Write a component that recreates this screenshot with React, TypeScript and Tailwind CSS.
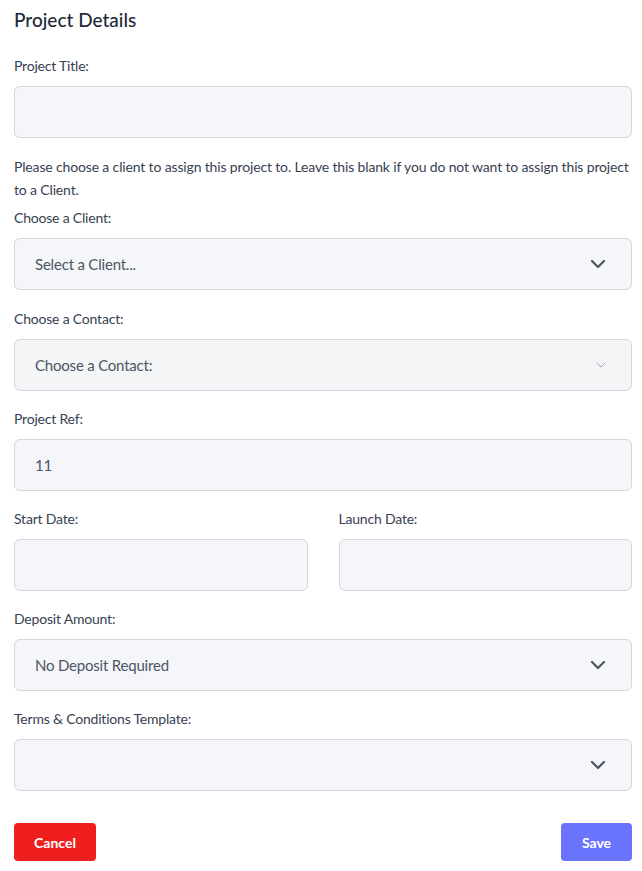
import React from 'react';

const font = { fontFamily: 'Lato, sans-serif' };

function Chevron({ muted = false }: { muted?: boolean }) {
  if (muted) {
    return (
      <svg width="12" height="12" viewBox="0 0 12 12" fill="none" className="text-[#a3a8b0]">
        <path d="M2 4l4 4 4-4" stroke="currentColor" strokeWidth="1" strokeLinecap="round" strokeLinejoin="round" />
      </svg>
    );
  }
  return (
    <svg width="18" height="18" viewBox="0 0 18 18" fill="none" className="text-[#4b5563]">
      <path d="M3 6l6 6 6-6" stroke="currentColor" strokeWidth="2.2" strokeLinecap="round" strokeLinejoin="round" />
    </svg>
  );
}

function Label({ children }: { children: React.ReactNode }) {
  return (
    <label className="block h-5 leading-5 text-[14px] tracking-[-0.2px] text-[#374151] mb-2.5">{children}</label>
  );
}

function TextBox({ value }: { value?: string }) {
  return (
    <div className="h-[52px] rounded-md border border-[#d4d7dd] bg-[#f5f6fa] px-5 flex items-center text-[15px] tracking-[-0.2px] text-[#4b5563]">
      {value}
    </div>
  );
}

function SelectBox({ value, muted = false }: { value?: string; muted?: boolean }) {
  return (
    <div
      className={`h-[52px] rounded-md border border-[#d4d7dd] pl-5 pr-6 flex items-center justify-between text-[15px] tracking-[-0.2px] text-[#4b5563] ${
        muted ? 'bg-[#f4f5f6]' : 'bg-[#f5f6fa]'
      }`}
    >
      <span>{value}</span>
      <Chevron muted={muted} />
    </div>
  );
}

export default function App() {
  return (
    <div className="bg-white w-[642px] min-h-[871px] pl-3.5 pr-2.5 pt-2" style={font}>
      <h1 className="text-[19px] leading-6 font-medium text-[#1f2937] mb-6">Project Details</h1>

      <div className="mb-[17px]">
        <Label>Project Title:</Label>
        <TextBox />
      </div>

      <p className="text-[14px] leading-[23px] tracking-[-0.15px] text-[#374151] mb-[7px]">
        Please choose a client to assign this project to. Leave this blank if you do not want to assign this project
        to a Client.
      </p>

      <div className="mb-[19px]">
        <Label>Choose a Client:</Label>
        <SelectBox value="Select a Client..." />
      </div>

      <div className="mb-[18px]">
        <Label>Choose a Contact:</Label>
        <SelectBox value="Choose a Contact:" muted />
      </div>

      <div className="mb-[18px]">
        <Label>Project Ref:</Label>
        <TextBox value="11" />
      </div>

      <div className="grid grid-cols-2 gap-[31px] mb-[18px]">
        <div>
          <Label>Start Date:</Label>
          <TextBox />
        </div>
        <div>
          <Label>Launch Date:</Label>
          <TextBox />
        </div>
      </div>

      <div className="mb-[18px]">
        <Label>Deposit Amount:</Label>
        <SelectBox value="No Deposit Required" />
      </div>

      <div className="mb-8">
        <Label>Terms &amp; Conditions Template:</Label>
        <SelectBox />
      </div>

      <div className="flex justify-between">
        <button className="h-[38px] w-[82px] rounded bg-[#ef1f1f] text-white text-[14px] font-bold">Cancel</button>
        <button className="h-[38px] w-[71px] rounded bg-[#6b74fd] text-white text-[14px] font-bold">Save</button>
      </div>
    </div>
  );
}
